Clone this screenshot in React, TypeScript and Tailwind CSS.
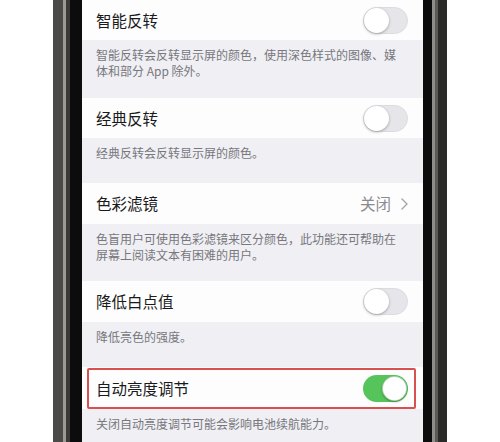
import React from 'react'

const font = { fontFamily: '"Noto Sans CJK SC", "Noto Sans", sans-serif' }

function Toggle({ on }: { on?: boolean }) {
  if (on) {
    return (
      <div className="relative w-[45px] h-[27px] rounded-full bg-[#55c45a]">
        <div className="absolute right-[1px] top-[1px] w-[25px] h-[25px] rounded-full bg-white border border-[#3f8f44]/40 shadow-[0_1px_2px_rgba(0,0,0,0.3)]" />
      </div>
    )
  }
  return (
    <div className="relative w-[45px] h-[27px] rounded-full bg-[#e6e6ea] border border-[#dcdce0]">
      <div className="absolute left-0 top-0 w-[25px] h-[25px] rounded-full bg-white shadow-[0_1px_3px_rgba(0,0,0,0.3)]" />
    </div>
  )
}

function Row({ title, children, h = 'h-[41px]', marked }: { title: string; children?: React.ReactNode; h?: string; marked?: boolean }) {
  return (
    <div className={`relative shrink-0 ${h} bg-[#fdfdfd] flex items-center justify-between pl-[14px] pr-[15px]`}>
      <span className="text-[15.5px] text-[#1a1a1c] pt-[1px]">{title}</span>
      {children}
      {marked && <div className="absolute left-[5px] right-[7px] top-[1px] bottom-0 border-2 border-[#d9514e] rounded-[2px]" />}
    </div>
  )
}

function Note({ lines, h }: { lines: string[]; h: string }) {
  return (
    <div className={`shrink-0 ${h} pl-[14px] pr-[12px] pt-[7px] text-[12px] leading-[16px] text-[#77777c]`}>
      {lines.map((l) => (
        <div key={l}>{l}</div>
      ))}
    </div>
  )
}

export default function App() {
  return (
    <div className="w-[500px] h-[442px] overflow-hidden bg-white flex" style={font}>
      <div className="w-[53px] bg-white" />
      <div className="w-[10px] bg-[#4b4a47]" />
      <div className="w-[3px] bg-[#9c9a93]" />
      <div className="w-[4px] bg-[#3b3a38]" />
      <div className="w-[12px] bg-[#0c0c0c]" />

      <div className="w-[341px] bg-[#efeff4] flex flex-col overflow-hidden">
        <Row title="智能反转" h="h-[40px]">
          <Toggle />
        </Row>
        <Note h="h-[58px]" lines={['智能反转会反转显示屏的颜色，使用深色样式的图像、媒', '体和部分 App 除外。']} />
        <Row title="经典反转" h="h-[40px]">
          <Toggle />
        </Row>
        <Note h="h-[45px]" lines={['经典反转会反转显示屏的颜色。']} />
        <Row title="色彩滤镜">
          <div className="flex items-center gap-[10px] text-[15.5px] text-[#8b8b90]">
            <span>关闭</span>
            <svg width="7" height="12" viewBox="0 0 7 12" fill="none">
              <path d="M1 1l5 5-5 5" stroke="#a5a5aa" strokeWidth="1.4" strokeLinecap="round" strokeLinejoin="round" />
            </svg>
          </div>
        </Row>
        <Note h="h-[57px]" lines={['色盲用户可使用色彩滤镜来区分颜色，此功能还可帮助在', '屏幕上阅读文本有困难的用户。']} />
        <Row title="降低白点值">
          <Toggle />
        </Row>
        <Note h="h-[45px]" lines={['降低亮色的强度。']} />
        <Row title="自动亮度调节" h="h-[42px]" marked>
          <Toggle on />
        </Row>
        <Note h="h-[40px]" lines={['关闭自动亮度调节可能会影响电池续航能力。']} />
      </div>

      <div className="w-[9px] bg-[#0c0c0c]" />
      <div className="w-[3px] bg-[#8f8d87]" />
      <div className="w-[3px] bg-[#5b5a57]" />
      <div className="w-[9px] bg-[#2a2a28]" />
      <div className="flex-1 bg-white" />
    </div>
  )
}
